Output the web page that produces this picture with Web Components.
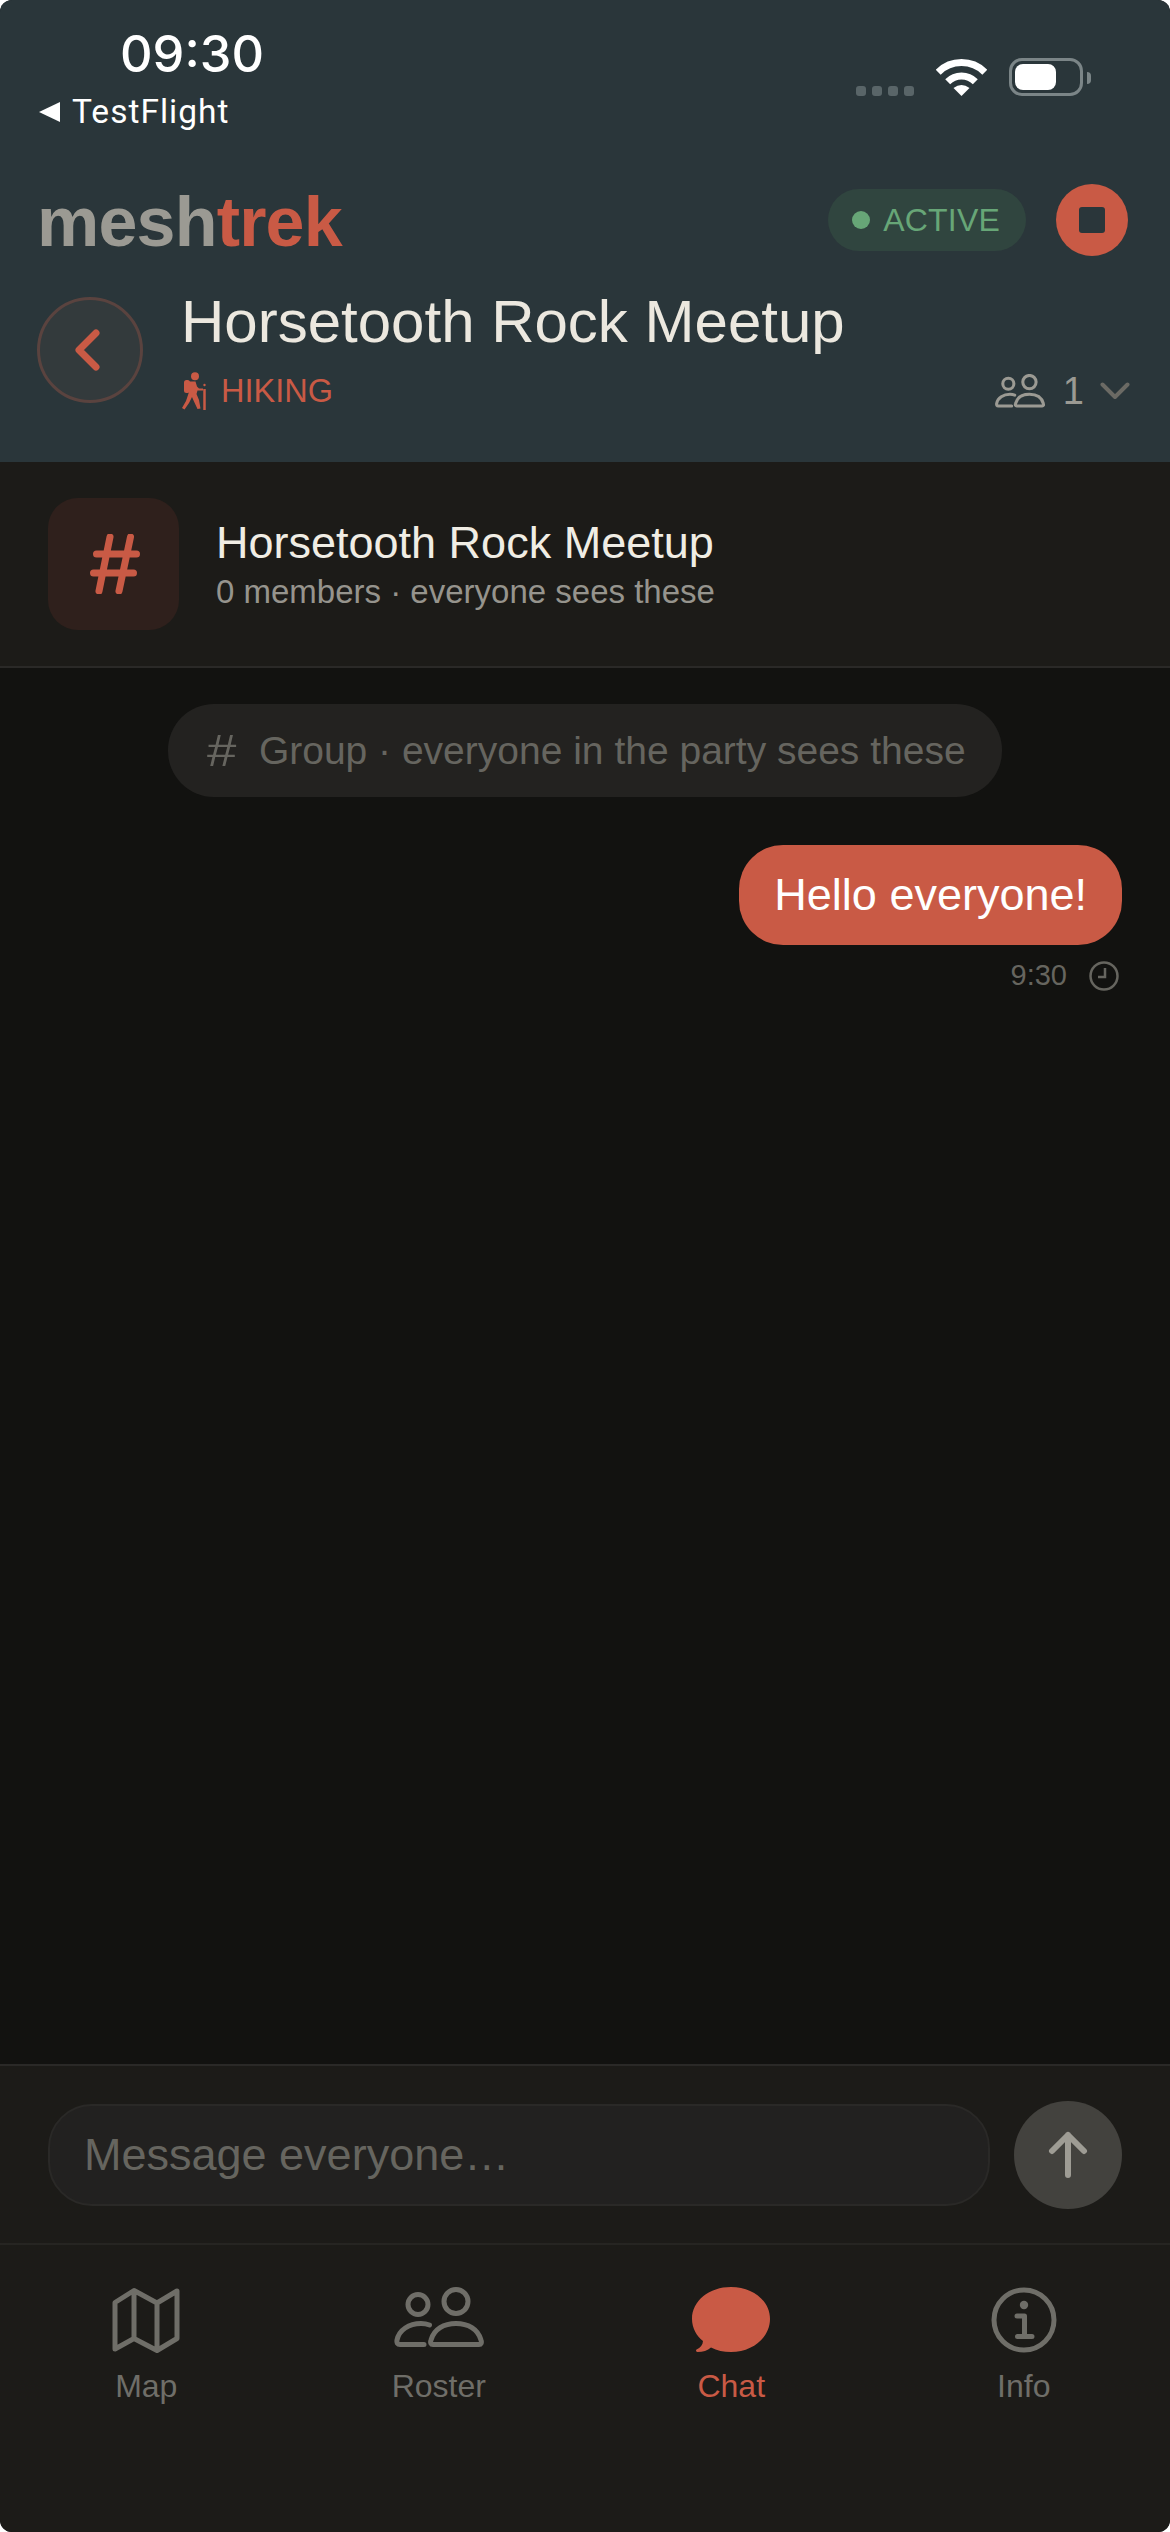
<!DOCTYPE html>
<html lang="en"><head><meta charset="utf-8"><title>meshtrek</title>
<style>
html,body{margin:0;padding:0;background:#fff;}
body{width:1170px;height:2532px;overflow:hidden;font-family:"Liberation Sans",Arial,sans-serif;}
</style></head>
<body>
<mesh-app>
  <mesh-header slot="top"></mesh-header>
  <channel-bar slot="top" name="Horsetooth Rock Meetup" sub="0 members · everyone sees these"></channel-bar>
  <chat-view>
    <chat-notice>Group · everyone in the party sees these</chat-notice>
    <chat-bubble time="9:30">Hello everyone!</chat-bubble>
  </chat-view>
  <chat-composer placeholder="Message everyone…"></chat-composer>
  <tab-bar>
    <tab-item icon="map">Map</tab-item>
    <tab-item icon="roster">Roster</tab-item>
    <tab-item icon="chat" active>Chat</tab-item>
    <tab-item icon="info">Info</tab-item>
  </tab-bar>
</mesh-app>
<script>
const PEOPLE=(sw)=>`<g fill="none" stroke="currentColor" stroke-width="${sw}" stroke-linecap="round" stroke-linejoin="round"><circle cx="24" cy="17.5" r="10"/><circle cx="62" cy="14.5" r="12"/><path d="M39 57.5C37 57.5 36 56 37 53C40 42 50 36.5 62 36.5C74 36.5 84 42 87 53C88 56 87 57.5 85 57.5Z"/><path d="M35.5 38C33 37 30 36.5 27 36.5C15 36.5 5 43 3 53C2.5 56 3.5 57.5 6 57.5H30"/></g>`;
const ICONS={
 map:`<svg width="68" height="66" viewBox="0 0 68 66"><path d="M3 15.5V62L22 51.5L45 63.500L65 51.500V4L45 16L22 3.500Z M22 4V51 M45 16V63" fill="none" stroke="currentColor" stroke-width="5" stroke-linecap="round" stroke-linejoin="round"/></svg>`,
 roster:`<svg width="90" height="66" viewBox="0 0 90 66">${PEOPLE(5)}</svg>`,
 chat:`<svg width="78" height="66" viewBox="0 0 78 66"><path fill="currentColor" d="M39 0C17.500 0 0 13.500 0 32C0 41 4.500 49 11 54C10.800 58 8.500 60.500 4.500 62.500C3.600 63.300 4 65 5.500 65C11 65 15.500 63.500 19 60.500C25 63.800 31.500 65 39 65C60.500 65 78 50.500 78 32C78 13.500 60.500 0 39 0Z"/></svg>`,
 info:`<svg width="66" height="66" viewBox="0 0 66 66"><circle cx="33" cy="33" r="30" fill="none" stroke="currentColor" stroke-width="5"/><circle cx="33" cy="18" r="4.200" fill="currentColor"/><path d="M26 29H33.500V49 M26.500 49.500H41" fill="none" stroke="currentColor" stroke-width="5" stroke-linecap="round" stroke-linejoin="round"/></svg>`
};
function def(name,css,html){
  customElements.define(name,class extends HTMLElement{
    connectedCallback(){
      if(this.shadowRoot)return;
      const r=this.attachShadow({mode:'open'});
      r.innerHTML=`<style>${css}</style>`+(typeof html==='function'?html(this):html);
    }
  });
}
def('mesh-app',`:host{display:flex;flex-direction:column;width:1170px;height:2532px;border-radius:12px;overflow:hidden;background:#121210;color:#ece8df;font-family:"Liberation Sans",Arial,sans-serif;}`,`<slot name="top"></slot><slot></slot>`);
def('status-bar',`:host{display:flex;justify-content:space-between;height:135px;box-sizing:border-box;padding:25px 79px 0 39px;color:#fff;}
.l{display:flex;flex-direction:column;}
.time{font:500 50.5px/58px Inter,sans-serif;margin-left:81px;}
.back{display:flex;align-items:center;gap:12px;font:400 33.5px/38px Roboto,sans-serif;letter-spacing:1px;margin-top:10px;}
.back i{display:block;width:0;height:0;border-style:solid;border-width:10px 21px 10px 0;border-color:transparent #fff transparent transparent;}
.r{display:flex;align-items:flex-end;height:71px;}
.dots{display:flex;gap:6px;margin-right:22px;}
.dots b{width:10px;height:10px;border-radius:3px;background:#596568;}
.wifi{display:block;margin-right:22px;}
.bat{width:74px;height:38px;box-sizing:border-box;border:3px solid #7b8587;border-radius:13px;padding:3px;}
.bat u{display:block;width:41px;height:26px;border-radius:8px;background:#fff;}
.nub{width:4px;height:12px;background:#7b8587;border-radius:0 6px 6px 0;margin:0 0 12px 4px;}
.bw{display:flex;align-items:flex-end;}
`,`<div class="l"><div class="time">09:30</div><div class="back"><i></i><span>TestFlight</span></div></div>
<div class="r"><div class="dots"><b></b><b></b><b></b><b></b></div>
<svg class="wifi" width="51" height="37" viewBox="0 0 51 37"><g fill="none" stroke="#fff" stroke-width="7"><path d="M2.200 13.200A33 33 0 0 1 48.800 13.200"/><path d="M11.700 22.700A19.500 19.500 0 0 1 39.300 22.700"/></g><path fill="#fff" d="M25.500 37L17.500 29Q25.500 23 33.500 29Z"/></svg>
<div class="bw"><div class="bat"><u></u></div><div class="nub"></div></div></div>`);
def('mesh-header',`:host{display:block;height:462px;box-sizing:border-box;background:#2a363a;flex:none;}
.brand{display:flex;justify-content:space-between;align-items:center;height:72px;margin-top:49px;padding:0 42px 0 37px;}
.logo{font:700 70px/72px "Liberation Sans",sans-serif;letter-spacing:-.8px;color:#9b9a93;padding-top:3px;}
.logo span{color:#c95a45;}
.acts{display:flex;align-items:center;gap:30px;}
.pill{display:flex;align-items:center;gap:13px;height:62px;box-sizing:border-box;padding:0 26px 0 24px;border-radius:31px;background:#30453f;color:#67a677;font-size:32px;letter-spacing:.2px;}
.pill i{width:18px;height:18px;border-radius:50%;background:#67a677;display:block;}
.stop{width:72px;height:72px;border-radius:50%;background:#c95a45;display:flex;align-items:center;justify-content:center;}
.stop i{display:block;width:26px;height:26px;border-radius:3px;background:#2a363a;}
.trip{display:flex;align-items:flex-start;margin-top:41px;padding:0 40px 0 37px;}
.backbtn{flex:none;width:106px;height:106px;box-sizing:border-box;border-radius:50%;background:#333a3c;border:3px solid #5a433f;display:flex;align-items:center;justify-content:center;margin-right:38px;}
.backbtn svg{margin-right:5px;}
.info{flex:1;display:flex;flex-direction:column;margin-top:-10px;}
.title{font-size:60px;line-height:70px;color:#ece8df;white-space:nowrap;}
.row{display:flex;align-items:center;justify-content:space-between;height:52px;margin-top:8px;}
.type{display:flex;align-items:center;gap:14px;color:#c95a45;font-size:32.5px;margin-left:1px;}
.cnt{display:flex;align-items:center;color:#9b9a93;font-size:38px;}
.cnt svg.p{margin-right:18px;}
.cnt svg.c{margin-left:16px;}
`,`<status-bar></status-bar>
<div class="brand"><div class="logo">mesh<span>trek</span></div><div class="acts"><div class="pill"><i></i>ACTIVE</div><div class="stop"><i></i></div></div></div>
<div class="trip"><div class="backbtn"><svg width="26" height="42" viewBox="0 0 26 42"><path d="M21 4L4 21L21 38" fill="none" stroke="#c95a45" stroke-width="7" stroke-linecap="round" stroke-linejoin="round"/></svg></div>
<div class="info"><div class="title">Horsetooth Rock Meetup</div>
<div class="row"><div class="type"><svg width="25" height="38" viewBox="0 0 25 38"><circle cx="13" cy="4.200" r="4" fill="#c95a45"/><rect x="2" y="8" width="6" height="13" rx="2.500" fill="#c95a45"/><path d="M7 9.500H13.500L15 14.500L17 16.500H21V18.500H15.500L14.500 22L17 28L18.500 36.500L15.500 37L12 29.500L10 25L7 31L2.500 37.500L0 36L4 29L7 20Z" fill="#c95a45"/><path d="M22.500 17V38" stroke="#c95a45" stroke-width="2.500"/><circle cx="22.500" cy="13" r="1.200" fill="#c95a45"/></svg>HIKING</div>
<div class="cnt"><svg class="p" width="50" height="34" viewBox="0 0 90 61">${PEOPLE(5.500)}</svg>1<svg class="c" width="30" height="18" viewBox="0 0 30 18"><path d="M2.500 2.500L15 15L27.500 2.500" fill="none" stroke="#6b6a64" stroke-width="4" stroke-linecap="round" stroke-linejoin="round"/></svg></div></div></div></div>`);
def('channel-bar',`:host{display:flex;align-items:center;flex:none;height:206px;box-sizing:border-box;padding:0 48px;background:#1c1b18;border-bottom:2px solid #2a2927;}
.ic{flex:none;width:131px;height:132px;border-radius:30px;background:#2f201c;display:flex;align-items:center;justify-content:center;margin-right:37px;}
.t{font-size:45px;line-height:52px;color:#f0ede4;margin-top:-1px;}
.s{font-size:33px;line-height:38px;color:#96948d;margin-top:4px;}
`,(h)=>`<div class="ic"><svg width="60" height="60" viewBox="0 0 60 60"><path d="M26 3L15 57 M46.500 3L35 57 M12.500 20H52.500 M9.500 39H49.500" fill="none" stroke="#c95a45" stroke-width="7" stroke-linecap="round"/></svg></div><div><div class="t">${h.getAttribute('name')}</div><div class="s">${h.getAttribute('sub')}</div></div>`);
def('chat-view',`:host{display:flex;flex-direction:column;flex:1;min-height:0;box-sizing:border-box;padding:36px 48px 0;gap:48px;background:#121210;}`,`<slot></slot>`);
def('chat-notice',`:host{display:flex;align-items:center;align-self:center;height:93px;box-sizing:border-box;padding:0 36px 0 39px;border-radius:46px;background:#232220;color:#66655f;font-size:39px;white-space:nowrap;}
b{display:inline-block;font-weight:400;font-size:44px;margin-right:27px;transform:scaleX(1.2);transform-origin:left center;}`,`<b>#</b><span><slot></slot></span>`);
def('chat-bubble',`:host{display:flex;flex-direction:column;align-items:flex-end;align-self:flex-end;}
.b{height:100px;box-sizing:border-box;display:flex;align-items:center;padding:0 35px;border-radius:44px;background:#c95a45;color:#fff;font-size:45px;white-space:nowrap;}
.m{display:flex;align-items:center;gap:22px;margin-top:14px;color:#66655f;font-size:29px;}
`,(h)=>`<div class="b"><slot></slot></div><div class="m"><span>${h.getAttribute('time')}</span><svg width="30" height="30" viewBox="0 0 30 30" style="margin-right:3px"><circle cx="15" cy="15" r="13.500" fill="none" stroke="#66655f" stroke-width="2.500"/><path d="M16 7V16H9" fill="none" stroke="#66655f" stroke-width="2.500"/></svg></div>`);
def('chat-composer',`:host{display:flex;align-items:center;gap:24px;flex:none;height:181px;box-sizing:border-box;padding:0 48px;background:#1c1b18;border-top:2px solid #2a2927;border-bottom:2px solid #262522;}
.f{flex:1;height:102px;box-sizing:border-box;display:flex;align-items:center;padding:0 34px;border-radius:44px;background:#222120;border:2px solid #2a2927;color:#66655f;font-size:45px;}
.s{flex:none;width:108px;height:108px;border-radius:50%;background:#43423e;display:flex;align-items:center;justify-content:center;}
`,(h)=>`<div class="f">${h.getAttribute('placeholder')}</div><div class="s"><svg width="40" height="48" viewBox="0 0 40 48"><path d="M20 44V4M4 20L20 4L36 20" fill="none" stroke="#9e9c94" stroke-width="6" stroke-linecap="round" stroke-linejoin="round"/></svg></div>`);
def('tab-bar',`:host{display:grid;grid-template-columns:repeat(4,1fr);flex:none;height:287px;box-sizing:border-box;padding-top:42px;background:#1c1b18;}`,`<slot></slot>`);
def('tab-item',`:host{display:flex;flex-direction:column;align-items:center;color:#6f6e68;font-size:32px;line-height:38px;}
:host([active]){color:#c95a45;}
.i{height:66px;margin-bottom:14px;display:block;}
.i svg{display:block;}`,(h)=>`<div class="i">${ICONS[h.getAttribute('icon')]}</div><div><slot></slot></div>`);
</script>
</body></html>
